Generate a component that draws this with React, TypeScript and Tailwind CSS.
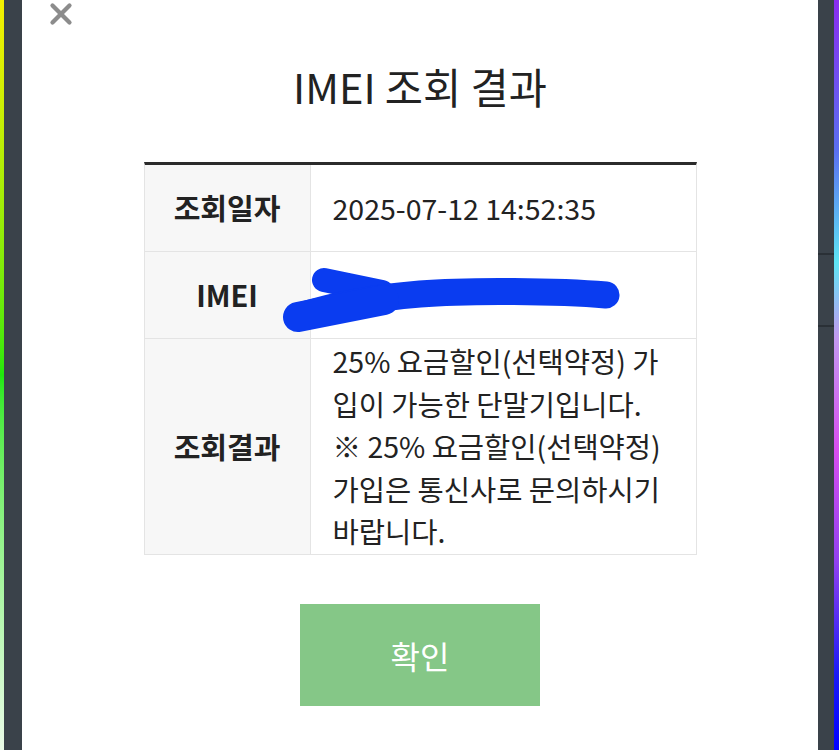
import { X } from 'lucide-react'

const font = { fontFamily: '"Noto Sans CJK KR", "Noto Sans", sans-serif' }

function Scribble() {
  return (
    <svg
      className="pointer-events-none absolute left-0 top-0"
      width="839"
      height="750"
      viewBox="0 0 839 750"
    >
      <g stroke="#0a3cf0" strokeLinecap="round" strokeLinejoin="round" fill="none">
        <path d="M324 280 L382 292" strokeWidth="24" />
        <path d="M300 316 C340 304 372 298 420 294 S560 291 606 295" strokeWidth="27" />
        <path d="M298 317 L384 300" strokeWidth="30" />
      </g>
    </svg>
  )
}

function Row({ label, children }: { label: string; children: React.ReactNode }) {
  return (
    <div className="flex border-b border-[#e4e4e4]">
      <div className="w-[166px] shrink-0 bg-[#f7f7f7] flex items-center justify-center border-r border-[#e4e4e4] text-[29px] font-bold text-[#222]">
        {label}
      </div>
      <div className="flex-1 flex items-center pl-[22px] pr-[22px] text-[28.5px] text-[#222] leading-[42.5px]">
        {children}
      </div>
    </div>
  )
}

export default function App() {
  return (
    <div className="relative w-[839px] h-[750px] overflow-hidden flex" style={font}>
      {/* left edge */}
      <div className="w-[4px] h-full bg-gradient-to-b from-[#f4f000] via-[#1ee80c] to-[#eafbe8]" />
      <div className="w-[18px] h-full bg-[#3a424a]" />

      {/* modal */}
      <div className="w-[796px] h-full bg-white relative">
        <button className="absolute left-[22px] top-[-3px] text-[#8c8c8c]">
          <X size={34} strokeWidth={3} />
        </button>

        <h1 className="pt-[56px] text-center text-[41.5px] leading-[60px] text-[#222]">IMEI 조회 결과</h1>

        <div className="mx-auto mt-[46px] w-[553px] border-t-[3px] border-[#2b2b2b] border-x border-x-[#e4e4e4]">
          <Row label="조회일자">
            <div className="h-[86px] flex items-center">2025-07-12 14:52:35</div>
          </Row>
          <Row label="IMEI">
            <div className="h-[86px]" />
          </Row>
          <Row label="조회결과">
            <p className="py-[1px]">
              25% 요금할인(선택약정) 가입이 가능한 단말기입니다.
              <br />※ 25% 요금할인(선택약정) 가입은 통신사로 문의하시기 바랍니다.
            </p>
          </Row>
        </div>

        <div className="flex justify-center mt-[49px]">
          <button className="w-[240px] h-[102px] bg-[#85c787] text-white text-[32px]">확인</button>
        </div>
      </div>

      {/* right edge */}
      <div className="w-[16px] h-full bg-[#3a424a] flex flex-col">
        <div className="h-[253px]" />
        <div className="h-[2px] bg-[#2a3036]" />
        <div className="h-[70px]" />
        <div className="h-[2px] bg-[#2a3036]" />
      </div>
      <div className="w-[5px] h-full bg-[linear-gradient(to_bottom,#8a2cf0_0%,#5a6ff0_20%,#5ee6f5_35%,#c39af0_45%,#d84ef0_60%,#9040f0_75%,#1a1af5_90%,#0000ff_100%)]" />

      <Scribble />
    </div>
  )
}
